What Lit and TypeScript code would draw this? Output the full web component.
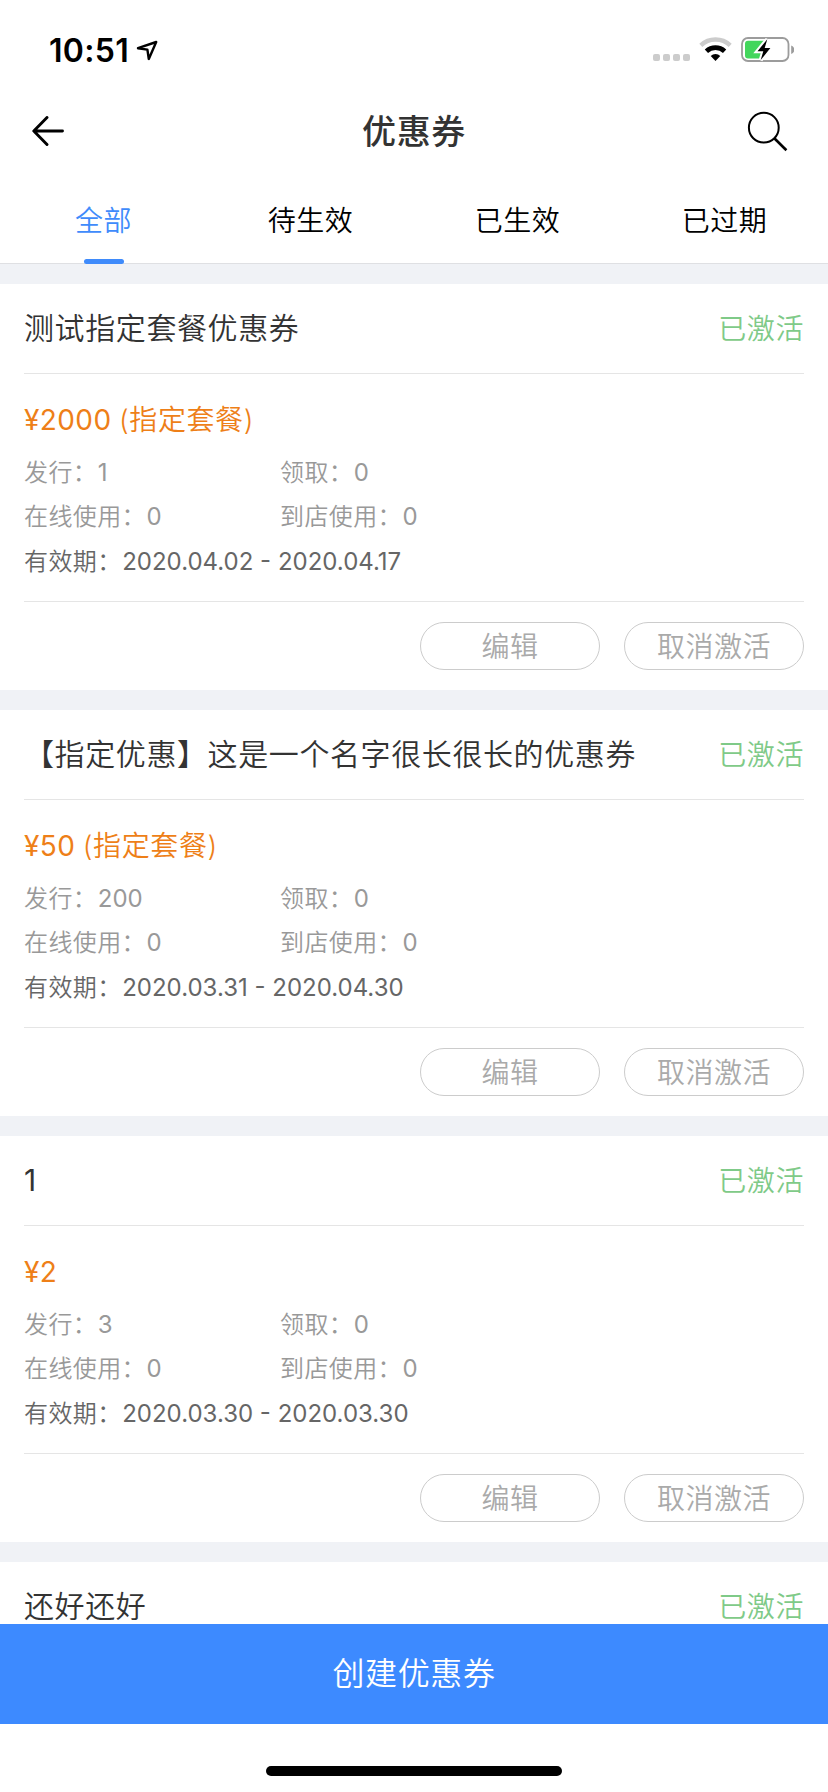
import { LitElement, html, css, nothing } from "lit";
import { customElement, property } from "lit/decorators.js";
import { classMap } from "lit/directives/class-map.js";

interface Coupon {
  name: string;
  details?: {
    amount: string;
    scope?: string;
    issued: number;
    claimed: number;
    online: number;
    store: number;
    period: string;
  };
}

const COUPONS: Coupon[] = [
  { name: "测试指定套餐优惠券", details: { amount: "¥2000", scope: "指定套餐", issued: 1, claimed: 0, online: 0, store: 0, period: "2020.04.02 - 2020.04.17" } },
  { name: "【指定优惠】这是一个名字很长很长的优惠券", details: { amount: "¥50", scope: "指定套餐", issued: 200, claimed: 0, online: 0, store: 0, period: "2020.03.31 - 2020.04.30" } },
  { name: "1", details: { amount: "¥2", issued: 3, claimed: 0, online: 0, store: 0, period: "2020.03.30 - 2020.03.30" } },
  { name: "还好还好" },
];

const TABS = ["全部", "待生效", "已生效", "已过期"];

@customElement("status-bar")
class StatusBar extends LitElement {
  static styles = css`
    :host { display: flex; height: 88px; flex: none; box-sizing: border-box; padding: 0 34px 0 49px; align-items: center; }
    .time { width: 80px; white-space: nowrap; font: 600 32px/40px Inter, sans-serif; letter-spacing: 0.3px; color: #000; padding-top: 13px; }
    .location { margin: 12px auto 0 7px; }
    .system { margin-top: 12px; }
    svg { display: block; }
  `;
  render() {
    return html`
      <span class="time">10:51</span>
      <svg class="location" width="22" height="22" viewBox="0 0 22 22">
        <path d="M2 10.200 20.200 4 12.800 21 11.400 11.600Z" transform="translate(0 -1)" fill="none" stroke="#000" stroke-width="2.400" stroke-linejoin="round" />
      </svg>
      <svg class="system" width="142" height="28" viewBox="0 0 142 28">
        <g fill="#ccc">
          <rect x="1" y="18" width="7" height="7" rx="2" />
          <rect x="11" y="18" width="7" height="7" rx="2" />
          <rect x="21" y="18" width="7" height="7" rx="2" />
          <rect x="31" y="18" width="7" height="7" rx="2" />
        </g>
        <path d="M48.800 9.300A21.500 21.500 0 0 1 78.200 9.300" fill="none" stroke="#ccc" stroke-width="4.400" />
        <path d="M54.400 15.200A13.400 13.400 0 0 1 72.600 15.200" fill="none" stroke="#000" stroke-width="4.800" />
        <path d="M63.500 25 58.700 19.900A7 7 0 0 1 68.300 19.900Z" fill="#000" />
        <rect x="90" y="2" width="46.500" height="23" rx="6" fill="none" stroke="#9c9c9c" stroke-width="1.800" />
        <path d="M139.200 9.600a4.400 4.400 0 0 1 0 8.400Z" fill="#9c9c9c" />
        <path d="M96 4.800h17l-8 11h6.500l-2.200 6.700H96a3 3 0 0 1-3-3V7.800a3 3 0 0 1 3-3Z" fill="#43d65c" />
        <path d="M115.300 3.200 105.500 15.200h5.800l-2.600 8.800 9.700-12h-5.700Z" fill="#000" stroke="#fff" stroke-width="4" paint-order="stroke" />
      </svg>
    `;
  }
}

@customElement("coupon-card")
class CouponCard extends LitElement {
  @property({ attribute: false }) coupon!: Coupon;

  static styles = css`
    :host { display: block; flex: none; background: #fff; padding: 0 24px; color: #333; font-weight: 350; }
    .head { display: flex; justify-content: space-between; height: 89px; line-height: 89px; border-bottom: 1px solid #e5e5e5; }
    .name { font-size: 30px; letter-spacing: 0.6px; }
    .latin { font-weight: 400; }
    .status { font-size: 28px; letter-spacing: 0.6px; line-height: 90px; color: #7fca88; }
    .body { display: flex; flex-direction: column; height: 227px; border-bottom: 1px solid #e5e5e5; }
    .price { margin: 21px 0 6px; height: 50px; line-height: 50px; font-size: 28px; letter-spacing: 0.6px; color: #ee7f18; }
    .scope { margin-left: -1px; }
    .stats { display: grid; grid-template-columns: 256px 1fr; font-size: 24px; line-height: 44px; letter-spacing: 0.4px; color: #999; }
    .period { font-size: 24px; line-height: 45px; letter-spacing: 0.4px; color: #666; }
    .amount { letter-spacing: 0.4px; font-weight: 400; }
    .num { margin-left: 0.6px; letter-spacing: 0; font-weight: 400; }
    .actions { display: flex; justify-content: flex-end; gap: 24px; padding: 20px 0; }
    .button { width: 180px; height: 48px; box-sizing: border-box; border: 1px solid #ccc; border-radius: 24px; padding: 1px 0 0; background: #fff; color: #aaa; font: inherit; font-size: 28px; line-height: 46px; letter-spacing: 0.5px; }
  `;

  private stat(label: string, value: number) {
    return html`<span>${label}：<span class="num">${value}</span></span>`;
  }

  private details(d: NonNullable<Coupon["details"]>) {
    return html`
      <div class="body">
        <div class="price"><span class="amount">${d.amount}</span>${d.scope ? html`<span class="scope"> (${d.scope})</span>` : nothing}</div>
        <div class="stats">
          ${this.stat("发行", d.issued)}${this.stat("领取", d.claimed)}
          ${this.stat("在线使用", d.online)}${this.stat("到店使用", d.store)}
        </div>
        <div class="period">有效期：<span class="num">${d.period}</span></div>
      </div>
      <div class="actions">
        <button class="button">编辑</button>
        <button class="button">取消激活</button>
      </div>
    `;
  }

  render() {
    const c = this.coupon;
    const latin = /^[\x20-\x7e]+$/.test(c.name);
    return html`
      <div class="head"><span class=${classMap({ name: true, latin })}>${c.name}</span><span class="status">已激活</span></div>
      ${c.details ? this.details(c.details) : nothing}
    `;
  }
}

@customElement("app-root")
class AppRoot extends LitElement {
  static styles = css`
    :host { display: flex; flex-direction: column; height: 1792px; overflow: hidden; background: #fff; font-family: Inter, "Noto Sans CJK SC", sans-serif; font-weight: 350; }
    .nav { display: grid; grid-template-columns: 60px 1fr 60px; align-items: center; height: 88px; flex: none; padding: 0 32px; box-sizing: border-box; }
    .title { font-size: 34px; letter-spacing: 0.6px; font-weight: 500; color: #333; text-align: center; line-height: 88px; }
    .icon { display: block; }
    .search { justify-self: end; margin-right: 7px; }
    .tabs { display: grid; grid-template-columns: repeat(4, 1fr); height: 87px; flex: none; border-bottom: 1px solid #dfe0e3; }
    .tab { display: flex; flex-direction: column; align-items: center; height: 88px; font-size: 28px; letter-spacing: 0.5px; line-height: 90px; color: #000; }
    .label { height: 83px; }
    .active { color: #3f8bfb; }
    .marker { width: 40px; height: 5px; border-radius: 2.5px; background: #3f8bfb; }
    .list { flex: 1; min-height: 0; overflow: hidden; display: flex; flex-direction: column; gap: 20px; padding-top: 20px; background: #f0f2f6; }
    .create { height: 100px; flex: none; border: 0; padding: 0; background: #3d8aff; color: #fff; font: 350 32px/100px Inter, "Noto Sans CJK SC", sans-serif; letter-spacing: 0.6px; }
    .home { height: 68px; flex: none; display: flex; justify-content: center; align-items: flex-end; padding-bottom: 16px; box-sizing: border-box; }
    .bar { width: 296px; height: 10px; border-radius: 5px; background: #000; }
  `;
  render() {
    return html`
      <status-bar></status-bar>
      <div class="nav">
        <svg class="icon" width="32" height="32" viewBox="0 0 32 32" fill="none" stroke="#000" stroke-width="2.900" stroke-linecap="round" stroke-linejoin="round">
          <path d="M15 1.500 1.800 15 15 28.500M2.200 15H30.500" />
        </svg>
        <div class="title">优惠券</div>
        <svg class="icon search" width="42" height="42" viewBox="0 0 42 42" fill="none" stroke="#000">
          <circle cx="16.800" cy="16.700" r="14.900" stroke-width="2" />
          <path d="M27.300 27.300 39.400 39.200" stroke-width="2.600" />
        </svg>
      </div>
      <div class="tabs">
        ${TABS.map((tab, i) => html`
          <div class=${classMap({ tab: true, active: i === 0 })}>
            <span class="label">${tab}</span>
            ${i === 0 ? html`<span class="marker"></span>` : nothing}
          </div>`)}
      </div>
      <div class="list">${COUPONS.map((c) => html`<coupon-card .coupon=${c}></coupon-card>`)}</div>
      <button class="create">创建优惠券</button>
      <div class="home"><span class="bar"></span></div>
    `;
  }
}
